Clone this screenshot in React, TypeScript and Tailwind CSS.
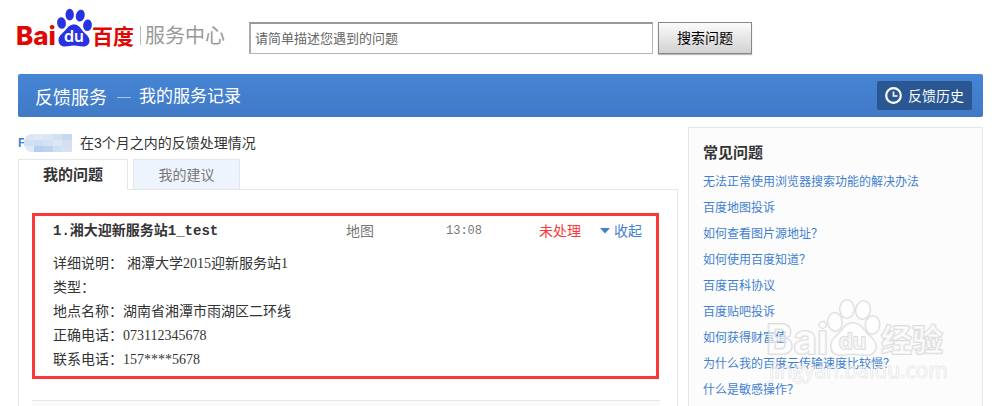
import React, { useState } from 'react';

const faqItems = [
    "无法正常使用浏览器搜索功能的解决办法",
    "百度地图投诉",
    "如何查看图片源地址？",
    "如何使用百度知道？",
    "百度百科协议",
    "百度贴吧投诉",
    "如何获得财富值",
    "为什么我的百度云传输速度比较慢？",
    "什么是敏感操作？",
];

const details = [
    { label: "详细说明：", value: "湘潭大学2015迎新服务站1", gap: true },
    { label: "类型：", value: "" },
    { label: "地点名称：", value: "湖南省湘潭市雨湖区二环线" },
    { label: "正确电话：", value: "073112345678" },
    { label: "联系电话：", value: "157****5678" },
];

const mosaic = [
    "bg-[#dbe6f5]", "bg-[#dfe9f7]", "bg-[#dbe6f5]", "bg-[#d3e0f3]", "bg-[#c6d8f0]",
    "bg-[#d3e0f3]", "bg-[#cfdef2]", "bg-[#d6e2f4]", "bg-[#dbe6f5]", "bg-[#d3e0f3]",
    "bg-[#dfe9f7]", "bg-[#b7ceee]", "bg-[#bdd2ef]", "bg-[#d0def2]", "bg-[#d6e2f4]",
];

const Logo = () => (
    <svg width="231" height="46" viewBox="0 0 231 46" role="img" aria-label="百度服务中心" className="shrink-0 overflow-visible">
        <text x="-2" y="37" fontFamily="Inter, sans-serif" fontSize="26" fontWeight="800" fill="#e10602">Bai</text>
        <g fill="#2932e1">
            <ellipse cx="43.5" cy="15" rx="4.4" ry="5.8" transform="rotate(-8 43.5 15)" />
            <ellipse cx="51.7" cy="6.6" rx="4.2" ry="5.8" />
            <ellipse cx="62.3" cy="7.6" rx="4.4" ry="6" transform="rotate(14 62.3 7.6)" />
            <ellipse cx="69.5" cy="17.3" rx="4.4" ry="5.8" transform="rotate(6 69.5 17.3)" />
            <path d="M56 16.500c4 0 6 2.500 8 5.500s7.500 6 7.500 10.500c0 4-3 6-6.500 6-3.500 0-5.500-1-9-1s-5.500 1-9 1c-4 0-6.500-2.500-6.500-6.500 0-4.500 4.500-7 7.500-10.500C50 19 52 16.500 56 16.500z" />
        </g>
        <text x="46" y="34" fontFamily="Inter, sans-serif" fontSize="16" fontWeight="600" fill="#fff">du</text>
        <text x="74" y="36" fontFamily="Noto Sans CJK SC, sans-serif" fontSize="21" fontWeight="700" fill="#e10602">百度</text>
        <path d="M122.500 18v19" stroke="#bbb" />
        <text x="127" y="35" fontFamily="Noto Sans CJK SC, sans-serif" fontSize="20" fill="#999">服务中心</text>
    </svg>
);

const Watermark = () => (
    <svg width="182" height="92" viewBox="0 0 182 92" aria-hidden="true" className="absolute right-[34px] top-[167px] pointer-events-none">
        <g fill="#fff" fillOpacity="0.6" stroke="#c8c8c8" strokeOpacity="0.6" strokeWidth="2" strokeLinejoin="round" style={{ paintOrder: "stroke" }}>
            <text x="0" y="59" fontFamily="Inter, sans-serif" fontSize="41" fontWeight="700">Bai</text>
            <ellipse cx="69" cy="27" rx="7" ry="9" transform="rotate(-8 69 27)" />
            <ellipse cx="81" cy="14" rx="7" ry="9" />
            <ellipse cx="97" cy="15" rx="7" ry="9" transform="rotate(12 97 15)" />
            <ellipse cx="106.500" cy="30" rx="7" ry="9" transform="rotate(6 106.500 30)" />
            <path d="M87 28c6 0 9 4 12 8s11 9 11 15c0 6-4 9-10 9-5 0-8-1-13-1s-8 1-13 1c-6 0-9-4-9-10 0-6 6-9 10-14s6-8 12-8z" />
            <text x="73" y="54" fontFamily="Inter, sans-serif" fontSize="22" fontWeight="600">du</text>
            <text x="115" y="56" fontFamily="Noto Sans CJK SC, sans-serif" fontSize="31" fontWeight="700">经验</text>
            <text x="3" y="83" fontFamily="Open Sans, sans-serif" fontSize="21" strokeWidth="1" strokeOpacity="0.5">jingyan.baidu.com</text>
        </g>
    </svg>
);

const App = () => {
    const [query, setQuery] = useState("");
    const [open, setOpen] = useState(true);

    return (
        <div className="flex flex-col min-h-screen bg-white pl-[18px] pr-[17px] text-sm text-[#333] font-['Liberation_Sans','Noto_Sans_CJK_SC',sans-serif]">
            <header className="flex items-start pt-2 pb-5">
                <Logo />
                <form className="flex gap-[5px] mt-[14px]" onSubmit={(e) => e.preventDefault()}>
                    <input
                        type="text"
                        aria-label="问题"
                        value={query}
                        onChange={(e) => setQuery(e.target.value)}
                        placeholder="请简单描述您遇到的问题"
                        className="w-[404px] h-8 px-1 text-[13px] border border-[#b6b6b6] border-t-2 border-t-[#999] border-l-2 border-l-[#aaa] placeholder:text-[#666]"
                    />
                    <button type="submit" className="w-[94px] h-8 text-black border border-[#888] bg-linear-to-b from-[#fbfbfb] to-[#d2d2d2] shadow-[0_1px_1px_#bbb]">
                        搜索问题
                    </button>
                </form>
            </header>

            <div className="flex items-center justify-between h-[43px] pl-[17px] pr-[11px] rounded-xs text-white bg-linear-to-b from-[#4685d5] to-[#4079c6]">
                <h1 className="flex items-center pt-1 text-lg">
                    反馈服务
                    <span className="w-[14px] h-px ml-[10px] mr-2 bg-[#a5c4ee]" />
                    <span className="text-[17px]">我的服务记录</span>
                </h1>
                <button type="button" className="flex items-center justify-center gap-1.5 w-[95px] h-[29px] rounded-xs bg-[#2a5692]">
                    <svg width="17" height="17" viewBox="0 0 17 17" fill="none" stroke="#fff" aria-hidden="true">
                        <circle cx="8.500" cy="8.500" r="7.300" strokeWidth="2.200" />
                        <path d="M8.500 4.500v4.500h4" strokeWidth="1.600" />
                    </svg>
                    反馈历史
                </button>
            </div>

            <div className="flex flex-1 gap-[10px] pt-[10px]">
                <main className="flex flex-col flex-1 min-w-0">
                    <div className="flex items-center h-8">
                        <span className="text-[#3f80d5] font-bold text-xs w-1.5 overflow-hidden">F</span>
                        <span className="grid grid-cols-5 w-12 h-[18px] mr-2 rounded-l-lg overflow-hidden">
                            {mosaic.map((color, index) => (
                                <span key={index} className={color} />
                            ))}
                        </span>
                        在3个月之内的反馈处理情况
                    </div>

                    <div role="tablist" className="flex gap-[5px] h-[30px]">
                        <button type="button" role="tab" aria-selected="true" className="z-10 -mb-px w-[110px] text-[15px] font-bold bg-white border border-b-0 border-[#e6e6e6]">
                            我的问题
                        </button>
                        <button type="button" role="tab" aria-selected="false" className="w-[107px] text-[#777] bg-[#eef4fe] border border-b-0 border-[#e6e6e6]">
                            我的建议
                        </button>
                    </div>

                    <section className="flex flex-col flex-1 pt-[23px] px-[13px] border border-b-0 border-[#e6e6e6]">
                        <article className="mr-[5px] pt-[3px] pb-1 pl-[18px] pr-[14px] border-3 border-[#fb3838]">
                            <div className="flex items-center leading-6 text-[#777]">
                                <h2 className="flex-1 font-bold text-[#333] font-['Liberation_Mono','Noto_Sans_CJK_SC',monospace]">
                                    1.湘大迎新服务站1_test
                                </h2>
                                <span className="w-[100px]">地图</span>
                                <span className="w-[93px] text-xs leading-6 font-['Liberation_Mono',monospace]">13:08</span>
                                <span className="w-[61px] text-[#fb3838]">未处理</span>
                                <button type="button" onClick={() => setOpen(!open)} className="flex items-center gap-1 text-[#3f80cf]">
                                    <svg width="10" height="6" viewBox="0 0 10 6" fill="currentColor" aria-hidden="true">
                                        <path d={open ? "M0 0h10L5 5.500z" : "M0 6h10L5 0z"} />
                                    </svg>
                                    收起
                                </button>
                            </div>
                            {open && (
                                <dl className="mt-[9px] leading-6 font-['Liberation_Serif','Noto_Sans_CJK_SC',serif]">
                                    {details.map((item) => (
                                        <div key={item.label} className="flex h-6">
                                            <dt className={item.gap ? "mr-1" : ""}>{item.label}</dt>
                                            <dd>{item.value}</dd>
                                        </div>
                                    ))}
                                </dl>
                            )}
                        </article>
                        <div className="flex-1 mt-[21px] mr-1 border-t border-[#e6e6e6] bg-[#fafafa]" />
                    </section>
                </main>

                <aside className="relative w-[295px] shrink-0 pl-[14px] pt-[13px] bg-[#fcfcfc] border border-b-0 border-[#e6e6e6]">
                    <h2 className="text-[15px] leading-6 font-bold">常见问题</h2>
                    <ul className="mt-1 text-xs text-[#3f7fd0]">
                        {faqItems.map((item) => (
                            <li key={item} className="h-[26px] leading-[26px]">
                                <a href="#" className="hover:underline">{item}</a>
                            </li>
                        ))}
                    </ul>
                    <Watermark />
                </aside>
            </div>
        </div>
    );
};

export default App;
